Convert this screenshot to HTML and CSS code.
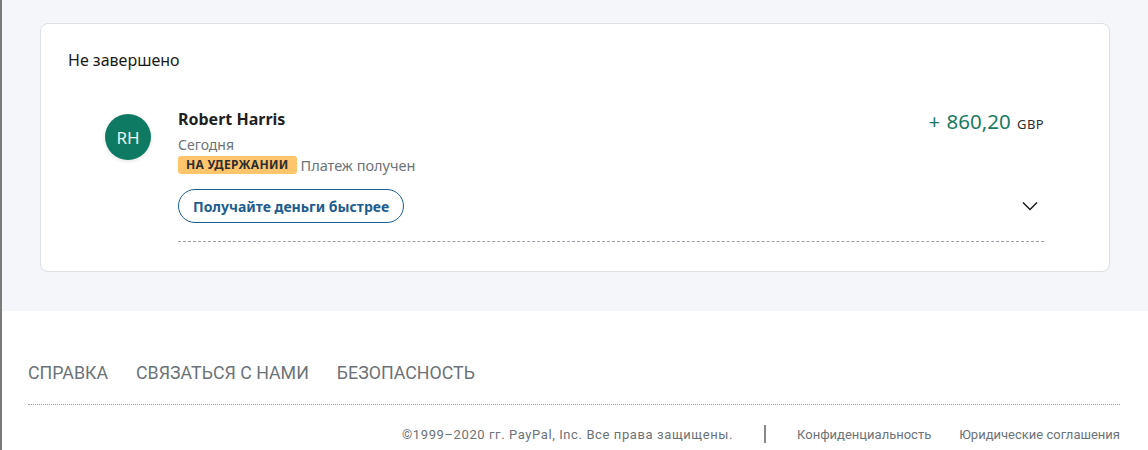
FILE: index.html
```html
<!DOCTYPE html>
<html lang="ru">
<head>
<meta charset="utf-8">
<title>PayPal</title>
<link rel="stylesheet" href="styles.css">
</head>
<body>
<div class="page">
  <main class="main">
    <section class="card">
      <h2 class="card-title">Не завершено</h2>
      <div class="txn">
        <div class="avatar">RH</div>
        <div class="txn-body">
          <div class="txn-top">
            <div class="txn-info">
              <div class="name">Robert Harris</div>
              <div class="date">Сегодня</div>
              <div class="status-row"><span class="badge">НА УДЕРЖАНИИ</span><span class="status">Платеж получен</span></div>
            </div>
            <div class="amount">+ 860,20 <span class="cur">GBP</span></div>
          </div>
          <div class="txn-bottom">
            <button class="pill">Получайте деньги быстрее</button>
            <svg class="chev" width="16" height="10" viewBox="0 0 16 10"><path d="M1 1.5 L8 8.5 L15 1.5" fill="none" stroke="#1a1a1a" stroke-width="1.5"/></svg>
          </div>
        </div>
      </div>
    </section>
  </main>
  <footer class="footer">
    <nav class="links">
      <a>СПРАВКА</a>
      <a>СВЯЗАТЬСЯ С НАМИ</a>
      <a>БЕЗОПАСНОСТЬ</a>
    </nav>
    <div class="legal">
      <span class="copy">©1999–2020 гг. PayPal, Inc. Все права защищены.</span>
      <span class="sep"></span>
      <a>Конфиденциальность</a>
      <a>Юридические соглашения</a>
    </div>
  </footer>
</div>
</body>
</html>
```

FILE: styles.css
```css
* { box-sizing: border-box; }
html, body { margin: 0; padding: 0; }
body { font-family: "Noto Sans", "Liberation Sans", sans-serif; color: #1a1a1a; background: #fff; }
.page { border-left: 2px solid #7a7a7a; min-height: 450px; }
.main { background: #f5f6fa; padding: 23px 38px 39px 38px; }
.card {
  background: #fff;
  border: 1px solid #dcdfe3;
  border-radius: 8px;
  padding: 25px 27px 29px 27px;
}
.card-title { margin: 0; font-size: 16px; font-weight: 400; line-height: 22px; color: #1a1a1a; }
.txn { display: flex; margin: 36px 38px 0 37px; gap: 27px; }
.avatar {
  width: 46px; height: 46px; border-radius: 50%;
  background: #0f7a63; color: #e6f4ef;
  display: flex; align-items: center; justify-content: center;
  font-size: 17px; margin-top: 7px; flex: none;
  box-shadow: 0 1px 4px rgba(0,0,0,0.12);
}
.txn-body { flex: 1; border-bottom: 1px dashed #9aa0a6; padding-bottom: 18px; }
.txn-top { display: flex; justify-content: space-between; }
.name { font-size: 16px; font-weight: 700; line-height: 24px; color: #1f1f1f; }
.date { font-size: 14px; line-height: 20px; color: #6c7378; margin-top: 4px; }
.status-row { display: flex; align-items: center; margin-top: 0; height: 20px; }
.badge {
  background: #ffc56d; color: #2c2e2f; font-weight: 700; font-size: 12px;
  line-height: 18px; padding: 0 8px; border-radius: 3px; letter-spacing: 0.3px;
}
.status { font-size: 14.5px; color: #6c7378; margin-left: 4px; }
.amount { font-size: 20.5px; color: #1b7a63; line-height: 24px; padding-top: 2px; white-space: nowrap; word-spacing: 1px; }
.cur { font-size: 13px; color: #2c2e2f; letter-spacing: 0.4px; }
.txn-bottom { display: flex; justify-content: space-between; align-items: center; margin-top: 14px; }
.pill {
  font-family: "Noto Sans", "Liberation Sans", sans-serif;
  height: 34px; padding: 0 14px; border: 1.5px solid #1d5d8f; border-radius: 17px;
  background: #fff; color: #1d5d8f; font-weight: 700; font-size: 14px;
}
.chev { margin-right: 6px; }
.footer { padding: 48px 28px 0 26px; font-family: Roboto, "Liberation Sans", sans-serif; color: #6c7378; }
.links { display: flex; gap: 28px; font-size: 17.8px; line-height: 28px; padding-bottom: 17px; border-bottom: 1px dotted #9aa0a6; }
.legal { display: flex; justify-content: flex-end; align-items: center; font-size: 13px; margin-top: 20px; gap: 28px; }
.copy { letter-spacing: 0.6px; }
.sep { width: 2px; height: 18px; background: #888; margin: 0 3px; }
```
